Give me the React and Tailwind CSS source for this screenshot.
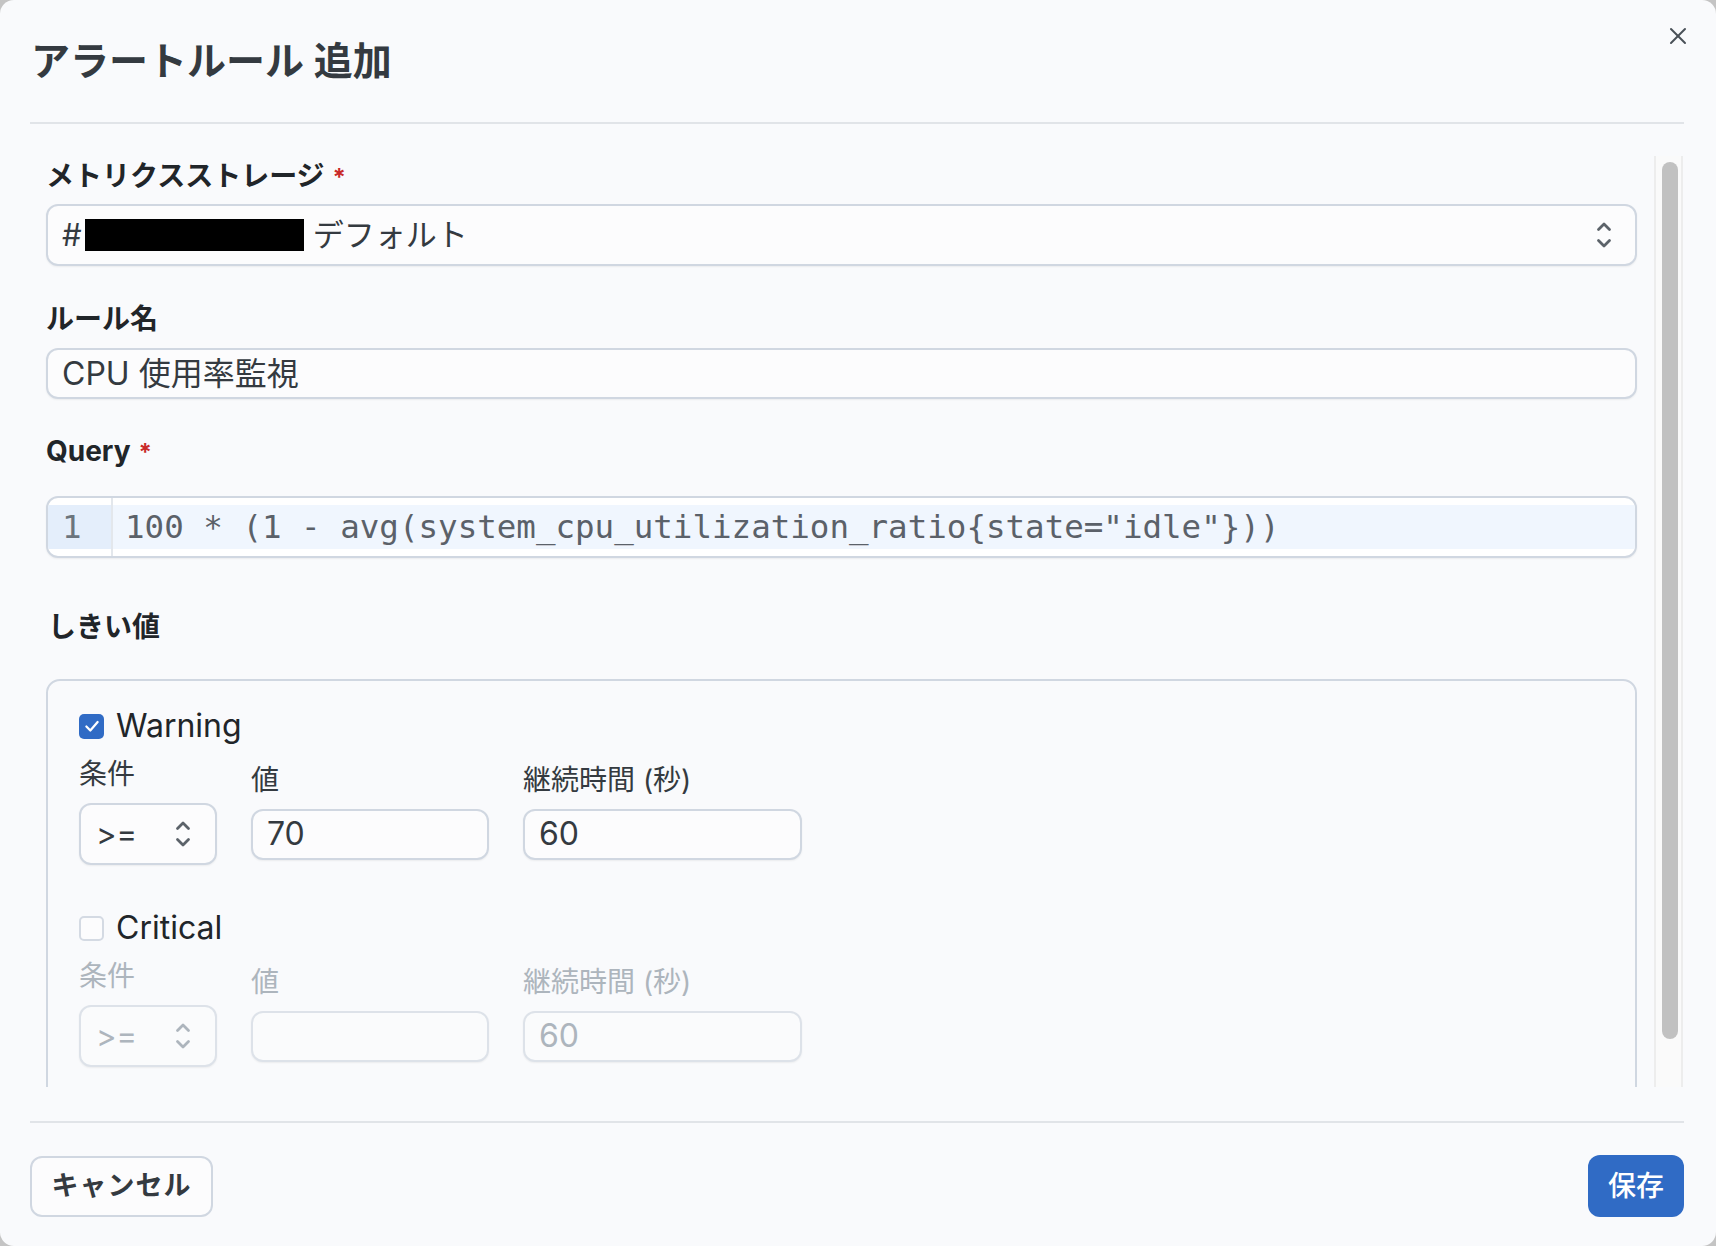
import React from 'react';

// stacked chevrons used by the select inputs
function UpDown({ className = '' }) {
  return (
    <svg width="16" height="30" viewBox="0 0 16 30" fill="none" stroke="currentColor" strokeWidth="2.8" strokeLinecap="round" strokeLinejoin="round" className={className}>
      <path d="M2.5 9.5 L8 4 L13.5 9.5" />
      <path d="M2.5 20.5 L8 26 L13.5 20.5" />
    </svg>
  );
}

function Label({ children, required, className = 'mb-[6px]' }) {
  return (
    <div className={`text-[28px] leading-[40px] font-bold text-[#212529] ${className}`}>
      {children}
      {required && <span className="text-[#c92a2a] ml-[8px] text-[24px]">*</span>}
    </div>
  );
}

function Checkbox({ checked }) {
  if (checked) {
    return (
      <span className="w-[25px] h-[25px] rounded-[5px] bg-[#306bc5] flex items-center justify-center shrink-0">
        <svg width="18" height="18" viewBox="0 0 16 16" fill="none" stroke="white" strokeWidth="2" strokeLinecap="round" strokeLinejoin="round">
          <path d="M3 8.5 L6.5 12 L13 4.5" />
        </svg>
      </span>
    );
  }
  return <span className="w-[25px] h-[25px] rounded-[5px] border-2 border-[#d4dae3] bg-[#fcfcfd] shrink-0" />;
}

function ThresholdBlock({ name, checked, value, duration, disabled }) {
  const labelColor = disabled ? 'text-[#adb5bd]' : 'text-[#343a40]';
  const fieldText = disabled ? 'text-[#adb5bd]' : 'text-[#343a40]';
  const fieldBorder = disabled ? 'border-[#dde2e9] bg-[#fafbfc]' : 'border-[#d0d7e1] bg-[#fcfcfd]';

  return (
    <div>
      <div className="flex items-center gap-[12px] h-[40px]">
        <Checkbox checked={checked} />
        <span className="text-[32px] text-[#212529]">{name}</span>
      </div>
      <div className="mt-[8px] flex items-center gap-[34px]">
        <div className="flex flex-col">
          <span className={`text-[28px] leading-[40px] mb-[9px] ${labelColor}`}>条件</span>
          <div className={`w-[138px] h-[62px] rounded-[12px] border-2 ${fieldBorder} shadow-[0_1px_2px_rgba(0,0,0,0.06)] flex items-center justify-between pl-[15px] pr-[24px]`}>
            <span className={`text-[31px] ${fieldText}`}>&gt;=</span>
            <UpDown className={disabled ? 'text-[#adb5bd]' : 'text-[#5c636a]'} />
          </div>
        </div>
        <div className="flex flex-col">
          <span className={`text-[28px] leading-[40px] mb-[9px] ${labelColor}`}>値</span>
          <div className={`w-[238px] h-[51px] rounded-[12px] border-2 ${fieldBorder} shadow-[0_1px_2px_rgba(0,0,0,0.06)] flex items-center pl-[14px]`}>
            <span className={`text-[32px] ${fieldText}`}>{value}</span>
          </div>
        </div>
        <div className="flex flex-col">
          <span className={`text-[28px] leading-[40px] mb-[9px] ${labelColor}`}>継続時間 (秒)</span>
          <div className={`w-[279px] h-[51px] rounded-[12px] border-2 ${fieldBorder} shadow-[0_1px_2px_rgba(0,0,0,0.06)] flex items-center pl-[14px]`}>
            <span className={`text-[32px] ${fieldText}`}>{duration}</span>
          </div>
        </div>
      </div>
    </div>
  );
}

export default function App() {
  return (
    <div className="w-[1716px] h-[1246px] bg-[#c4c4c4] font-['Inter','Noto_Sans_CJK_JP',sans-serif]">
      <div className="w-full h-full rounded-[14px] bg-[#f9fafc] flex flex-col pl-[30px] pr-[32px]">
        {/* Header */}
        <div className="h-[124px] shrink-0 flex justify-between border-b-2 border-[#e1e4e8]">
          <h2 className="self-center pl-[1px] text-[39px] font-semibold text-[#343a40]">アラートルール 追加</h2>
          <button className="self-start mt-[27px] mr-[-3px] text-[#495057]">
            <svg width="18" height="18" viewBox="0 0 18 18" fill="none" stroke="currentColor" strokeWidth="2" strokeLinecap="round">
              <path d="M2 2 L16 16" />
              <path d="M16 2 L2 16" />
            </svg>
          </button>
        </div>

        {/* Scrollable body */}
        <div className="mt-[32px] h-[931px] shrink-0 flex">
          <div className="flex-1 min-w-0 overflow-hidden pl-[16px] pr-[17px]">
            <Label required>メトリクスストレージ</Label>
            <div className="h-[62px] rounded-[12px] border-2 border-[#d0d7e1] bg-[#fcfcfd] shadow-[0_1px_2px_rgba(0,0,0,0.06)] flex items-center justify-between pl-[14px] pr-[23px]">
              <div className="flex items-center text-[31px] text-[#343a40]">
                <span>#</span>
                <span className="inline-block w-[219px] h-[32px] bg-black ml-[3px] mr-[9px]" />
                <span>デフォルト</span>
              </div>
              <UpDown className="text-[#5c636a]" />
            </div>

            <Label className="mt-[33px] mb-[9px]">ルール名</Label>
            <div className="h-[51px] rounded-[12px] border-2 border-[#d0d7e1] bg-[#fcfcfd] shadow-[0_1px_2px_rgba(0,0,0,0.06)] flex items-center pl-[14px]">
              <span className="text-[32px] text-[#343a40]">CPU 使用率監視</span>
            </div>

            <Label required className="mt-[32px] mb-[23px]">Query</Label>
            <div className="h-[62px] rounded-[12px] border-2 border-[#d0d7e1] bg-white shadow-[0_1px_2px_rgba(0,0,0,0.06)] overflow-hidden flex font-['DejaVu_Sans_Mono',monospace] text-[32.5px] text-[#5b6169]">
              <div className="w-[65px] shrink-0 border-r-2 border-[#e3e7ec] py-[7px]">
                <div className="h-[44px] leading-[44px] bg-[#e4eefb] pl-[14px] text-[#6c757d]">1</div>
              </div>
              <div className="flex-1 py-[7px]">
                <div className="h-[44px] leading-[44px] bg-[#f0f6fe] pl-[12px] whitespace-pre">100 * (1 - avg(system_cpu_utilization_ratio{'{'}state="idle"{'}'}))</div>
              </div>
            </div>

            <div className="mt-[49px] text-[28px] leading-[40px] font-bold text-[#212529] pl-[2px]">しきい値</div>

            <div className="mt-[32px] rounded-[14px] border-2 border-[#d0d7e1] pl-[31px] pr-[32px] pt-[25px] pb-[40px]">
              <ThresholdBlock name="Warning" checked value="70" duration="60" />
              <div className="mt-[43px]">
                <ThresholdBlock name="Critical" checked={false} value="" duration="60" disabled />
              </div>
            </div>
          </div>

          {/* scrollbar */}
          <div className="w-[29px] h-full shrink-0 mr-[1px] bg-[#fafafa] border-l-2 border-r-2 border-[#ededed] pl-[6px] pt-[6px]">
            <div className="w-[16px] h-[877px] rounded-full bg-[#c1c1c1]" />
          </div>
        </div>

        {/* Footer */}
        <div className="mt-[34px] border-t-2 border-[#e1e4e8] pt-[32px] flex justify-between items-center">
          <button className="w-[183px] h-[61px] rounded-[12px] border-2 border-[#d0d7e1] bg-[#fcfcfd] text-[27px] font-bold text-[#343a40] tracking-[1px]">キャンセル</button>
          <button className="w-[96px] h-[62px] rounded-[12px] bg-[#306bc5] text-[28px] font-medium text-white">保存</button>
        </div>
      </div>
    </div>
  );
}
